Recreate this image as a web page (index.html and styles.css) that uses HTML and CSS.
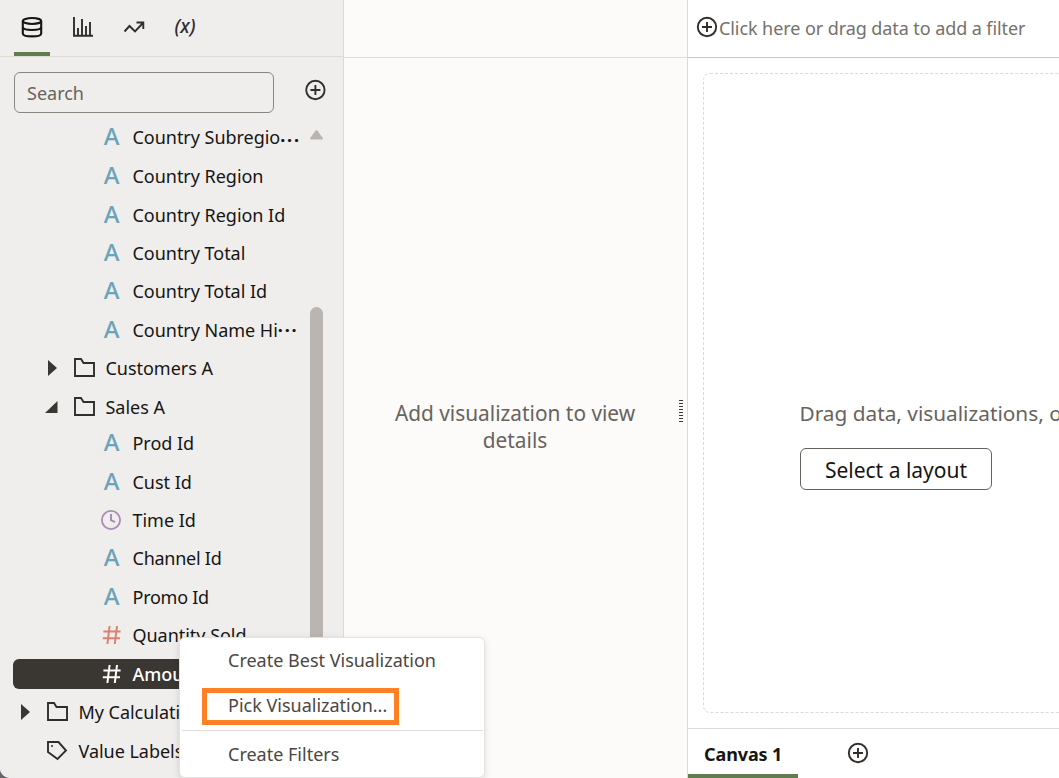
FILE: index.html
```
<!DOCTYPE html>
<html lang="en">
<head>
<meta charset="utf-8">
<title>Canvas 1</title>
<link rel="stylesheet" href="styles.css">
</head>
<body>
<svg class="defs" width="0" height="0" aria-hidden="true">
  <symbol id="plus" viewBox="0 0 22 22"><circle cx="11" cy="11" r="9.2"/><path d="M11 6v10M6 11h10"/></symbol>
  <symbol id="folder" viewBox="0 0 22 22"><path d="M2 2h6l2.500 4H21v13H2z"/></symbol>
  <symbol id="hash" viewBox="0 0 20 20"><path d="M7.600 1 5.400 19M15 1l-2.200 18M1.400 6.500h17.200M.8 13.200H18"/></symbol>
</svg>
<div class="app">
  <aside class="data-panel">
    <nav class="tabs">
      <button class="tab active" aria-label="Data"><svg class="ico" width="22" height="22" viewBox="0 0 22 22"><ellipse cx="11" cy="5" rx="9.200" ry="3"/><path d="M1.800 5v12.400c0 1.900 4 3 9.200 3s9.200-1.100 9.200-3V5M1.800 11c0 1.900 4 3 9.200 3s9.200-1.100 9.200-3"/></svg></button>
      <button class="tab" aria-label="Visualizations"><svg class="ico" width="22" height="22" viewBox="0 0 22 22"><path d="M2 1v18.800h19M6 19V12M10 19V3M14 19v-9M18 19V6"/></svg></button>
      <button class="tab" aria-label="Analytics"><svg class="ico" width="22" height="22" viewBox="0 0 22 22"><path d="m1.500 15.500 5-5.500 5.500 5.500L20 7M13.500 6.500h6.800V13"/></svg></button>
      <button class="tab fx">(x)</button>
    </nav>
    <div class="search-row">
      <input class="search" placeholder="Search" aria-label="Search">
      <svg class="ico add" width="22" height="22"><use href="#plus"/></svg>
    </div>
    <div class="tree">
      <div class="row"><span class="attr">A</span><span class="label">Country Subregio<i class="dots low">···</i></span></div>
      <div class="row"><span class="attr">A</span><span class="label">Country Region</span></div>
      <div class="row"><span class="attr">A</span><span class="label">Country Region Id</span></div>
      <div class="row"><span class="attr">A</span><span class="label">Country Total</span></div>
      <div class="row"><span class="attr">A</span><span class="label">Country Total Id</span></div>
      <div class="row"><span class="attr">A</span><span class="label">Country Name Hi<i class="dots">···</i></span></div>
      <div class="row folder"><svg class="caret" width="16" height="16"><path d="M3 0l9 8-9 8z"/></svg><svg class="ico" width="22" height="22"><use href="#folder"/></svg><span class="label">Customers A</span></div>
      <div class="row folder"><svg class="caret" width="16" height="16"><path d="M12.500 2v12H0z"/></svg><svg class="ico" width="22" height="22"><use href="#folder"/></svg><span class="label">Sales A</span></div>
      <div class="row first"><span class="attr">A</span><span class="label">Prod Id</span></div>
      <div class="row"><span class="attr">A</span><span class="label">Cust Id</span></div>
      <div class="row"><svg class="time" width="22" height="22"><circle cx="11" cy="11" r="9.100"/><path d="M11 5v6.200l4 2"/></svg><span class="label">Time Id</span></div>
      <div class="row"><span class="attr">A</span><span class="label tight">Channel Id</span></div>
      <div class="row"><span class="attr">A</span><span class="label tight">Promo Id</span></div>
      <div class="row"><svg class="measure" width="20" height="20"><use href="#hash"/></svg><span class="label">Quantity Sold</span></div>
      <div class="row selected"><svg class="measure" width="20" height="20"><use href="#hash"/></svg><span class="label">Amount Sold</span></div>
      <div class="row root"><svg class="caret" width="16" height="16"><path d="M3 0l9 8-9 8z"/></svg><svg class="ico" width="22" height="22"><use href="#folder"/></svg><span class="label">My Calculations</span></div>
      <div class="row root"><span class="caret"></span><svg class="ico tag" width="22" height="22"><path d="M2 2h10.500l7.500 8.500-8.500 8.500L2 12z"/><circle class="hole" cx="6" cy="6" r="1"/></svg><span class="label">Value Labels</span></div>
      <div class="scroll"><svg width="16" height="12"><path d="M7.500 3 2 10.500h11z"/></svg><div class="thumb"></div></div>
    </div>
  </aside>
  <section class="grammar">
    <div class="grammar-top"></div>
    <div class="grammar-body"><p>Add visualization to view details</p><div class="grip"></div></div>
  </section>
  <main class="work">
    <header class="filters"><svg class="ico" width="22" height="22"><use href="#plus"/></svg><span>Click here or drag data to add a filter</span></header>
    <div class="canvas">
      <div class="drop">
        <p>Drag data, visualizations, or</p>
        <button class="layout">Select a layout</button>
      </div>
    </div>
    <footer class="canvases"><div class="canvas-tab">Canvas 1</div><svg class="ico" width="22" height="22"><use href="#plus"/></svg></footer>
  </main>
  <div class="menu">
    <div class="item best">Create Best Visualization</div>
    <div class="item pick">Pick Visualization...</div>
    <div class="item filter">Create Filters</div>
  </div>
</div>
</body>
</html>
```
FILE: styles.css
```
* { box-sizing: border-box; }
body { margin: 0; background: #66656a; font-family: "Noto Sans", sans-serif; font-size: 18px; color: #161513; overflow: hidden; }
button { font: inherit; background: none; border: 0; padding: 0; }
p { margin: 0; }
.defs { position: absolute; }
.app { position: relative; display: grid; grid-template-columns: 344px 344px 1fr; width: 1059px; height: 778px; overflow: hidden; border-bottom-left-radius: 10px; background: #fff; }
.ico { flex: none; fill: none; stroke: #312d2a; stroke-width: 1.9; }

.data-panel { background: #f0eeec; border-right: 1px solid #dddad6; height: 778px; overflow: hidden; }
.tabs { display: flex; gap: 15px; height: 57px; padding-left: 14px; border-bottom: 1px solid #dfdcd8; }
.tab { width: 36px; height: 56px; display: flex; justify-content: center; padding-top: 16px; }
.active { border-bottom: 4px solid #5f7d4f; }
.active .ico { stroke: #161513; stroke-width: 2.1; }
.fx { font-size: 19px; line-height: 22px; font-style: italic; font-weight: 500; color: #312d2a; padding-top: 15px; }
.search-row { display: flex; height: 61px; padding: 15px 17px 0 14px; justify-content: space-between; }
.search { width: 260px; height: 41px; border: 1px solid #8b8580; border-radius: 6px; background: transparent; padding: 0 12px; font: inherit; }
.search::placeholder { color: #68635e; opacity: 1; }
.add { margin-top: 7px; transform: translateX(0.4px); }

.tree { position: relative; height: 660px; padding-top: 0.4px; }
.row { display: flex; align-items: center; height: 38.45px; padding-left: 101.5px; white-space: nowrap; }
.row:first-child { margin-top: -0.6px; height: 39.05px; padding-bottom: 0.6px; }
.row.folder { padding-left: 45px; }
.row.root { padding-left: 18px; }
.row.first { margin-top: -2px; }
.attr { width: 20px; margin-right: 11px; text-align: center; font-size: 24px; line-height: 30px; color: #6ba3b9; font-weight: 500; padding-bottom: 2px; }
.label { line-height: 26px; letter-spacing: -0.03px; }
.tight { letter-spacing: -0.25px; }
.dots { font-style: normal; font-weight: 700; letter-spacing: 1.8px; }
.low { position: relative; top: 3px; }
.caret { width: 16px; height: 16px; margin-right: 11.5px; fill: #3a3631; }
.folder .label, .root .label { margin-left: 11px; }
.time { fill: none; stroke: #a98bb8; stroke-width: 1.8; margin: 0 10.5px 0 -1.5px; }
.time path { stroke-width: 2; }
.measure { fill: none; stroke: #dc8072; stroke-width: 2; margin-right: 11px; }
.selected { height: 30px; margin: 4.2px 0 4.2px 13px; padding-left: 88.5px; background: #3a3631; color: #fff; border-radius: 6px; font-weight: 500; }
.selected .measure { stroke: #fff; }
.tag .hole { fill: #312d2a; stroke: none; }
.scroll { position: absolute; left: 309px; top: 10px; width: 15px; }
.scroll svg { display: block; fill: #bab5b0; stroke: #bab5b0; stroke-width: 2; stroke-linejoin: round; }
.thumb { width: 13px; height: 400px; margin: 167px 0 0 1px; border-radius: 7px; background: #bab5b0; }

.grammar { background: #fcfbfa; border-right: 1px solid #dddad6; }
.grammar-top { height: 58px; border-bottom: 1px solid #dfdcd8; }
.grammar-body { display: flex; height: 720px; padding: 342px 3px 0 48px; color: #68635e; }
.grammar-body p { width: 246px; font-size: 20.85px; line-height: 27px; text-align: center; }
.grip { width: 4px; height: 24px; margin-left: 41px; background: repeating-linear-gradient(#3a3631 0 1px, transparent 1px 3px); }

.work { display: flex; flex-direction: column; height: 778px; overflow: hidden; }
.filters { display: flex; align-items: center; height: 58px; padding-left: 8px; border-bottom: 1px solid #c9c7c5; color: #75716c; white-space: nowrap; letter-spacing: -0.08px; }
.filters .ico { margin-top: -3px; margin-right: 1px; }
.filters span { margin-top: -2px; }
.canvas { height: 670px; padding: 15px 0 0 15px; }
.drop { width: 500px; height: 640px; border: 1px dashed #dcdad8; border-radius: 7px; padding: 325px 0 0 96px; font-size: 20.8px; color: #68635e; white-space: nowrap; }
.drop p { line-height: 28px; margin-left: -0.5px; }
.layout { display: block; width: 192px; height: 42px; margin-top: 21px; border: 1px solid #66625e; border-radius: 6px; color: #161513; font-size: 21px; padding-top: 2px; }
.canvases { display: flex; align-items: center; height: 50px; border-top: 1px solid #dfdcd8; }
.canvas-tab { width: 110px; height: 49px; padding: 12px 0 0 16px; line-height: 26px; font-weight: 700; letter-spacing: -0.1px; border-bottom: 4px solid #5f7d4f; white-space: nowrap; }
.canvases .ico { margin: -1px 0 0 49px; }

.menu { position: absolute; left: 179px; top: 637px; width: 306px; height: 141px; background: #fff; border: 1px solid #e5e3e1; border-radius: 6px; box-shadow: 0 2px 7px #00000022; color: #4b4743; white-space: nowrap; }
.item { line-height: 26px; }
.best { padding: 9px 0 0 48px; height: 50px; }
.pick { width: 197px; height: 37px; margin-left: 22px; padding-left: 21px; line-height: 25px; border: 5px solid #ff8126; }
.filter { margin: 5px 1px 0 2px; padding: 10px 0 0 46px; border-top: 1px solid #dfdddb; }
```
